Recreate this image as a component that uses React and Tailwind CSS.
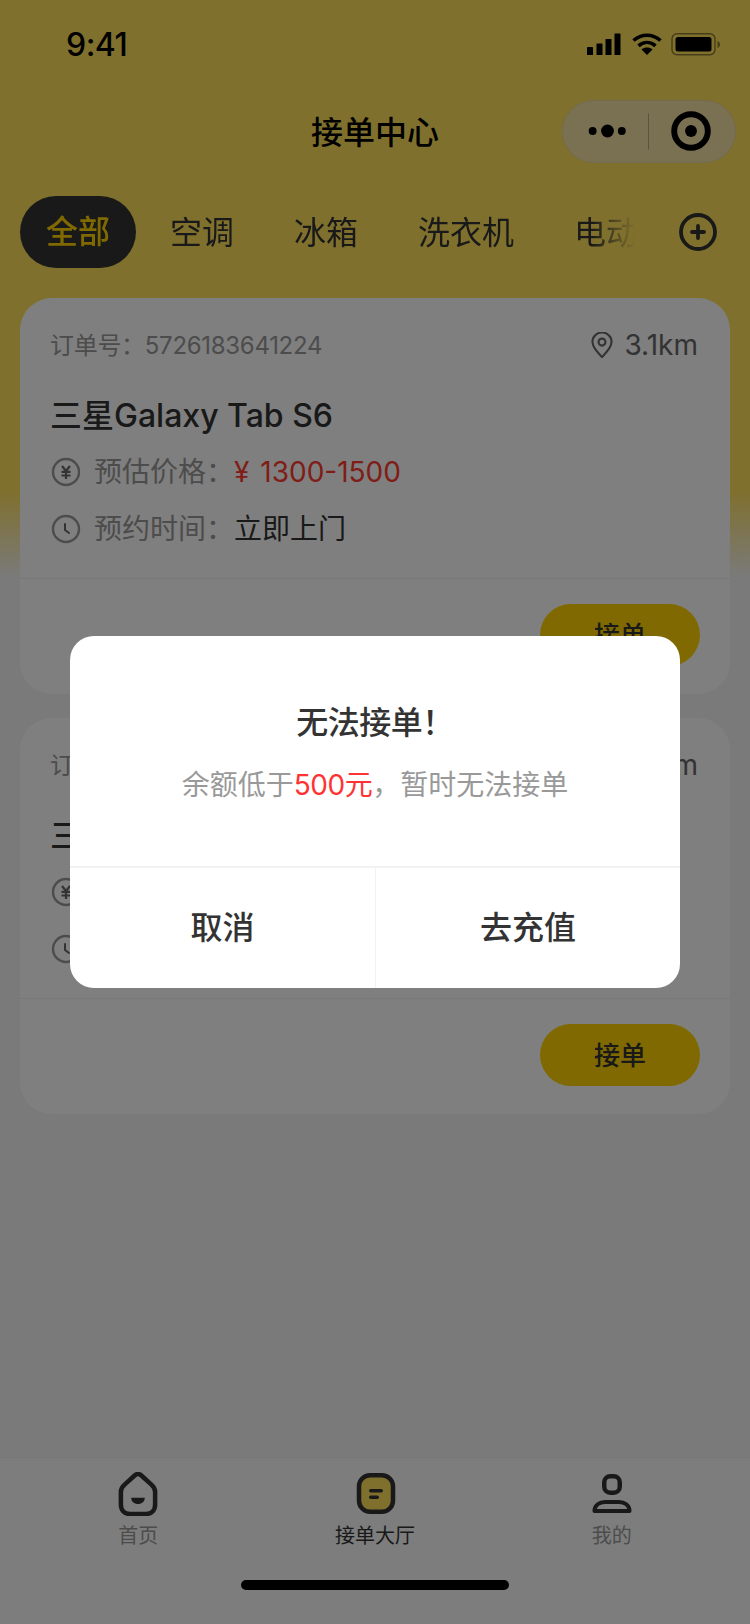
import React from 'react'

const font = 'font-["Inter","Noto_Sans_CJK_SC",sans-serif]'

function StatusIcons() {
  return (
    <svg width="134" height="24" viewBox="0 0 134 24" className="block">
      {/* signal */}
      <rect x="0" y="14" width="6" height="8" rx="0.5" fill="#000" />
      <rect x="9.5" y="10.5" width="6" height="11.5" rx="0.5" fill="#000" />
      <rect x="18.5" y="6" width="6" height="16" rx="0.5" fill="#000" />
      <rect x="27.5" y="0.5" width="6" height="21.5" rx="0.5" fill="#000" />
      {/* wifi */}
      <path d="M46.5 7.5c8-7 19-7 27 0" fill="none" stroke="#000" strokeWidth="3.6" />
      <path d="M51.5 12.8c5.2-4.4 11.8-4.4 17 0" fill="none" stroke="#000" strokeWidth="3.6" />
      <path d="M60 22l-5.5-5.6c3.3-2.6 7.7-2.6 11 0z" fill="#000" />
      {/* battery */}
      <rect x="85" y="0.7" width="43" height="21" rx="5" fill="none" stroke="#000" strokeOpacity="0.45" strokeWidth="1.4" />
      <rect x="88.5" y="4" width="36" height="14.5" rx="2.5" fill="#000" />
      <path d="M130.5 8v7c1.6-.6 2.6-2 2.6-3.5s-1-2.9-2.6-3.5z" fill="#000" fillOpacity="0.45" />
    </svg>
  )
}

function Pin() {
  return (
    <svg width="22" height="26" viewBox="1 1 20 24.500" fill="none" stroke="#666" strokeWidth="2">
      <path d="M11 1.500c-5 0-9 3.900-9 8.800 0 5.700 5.600 10.800 9 14.200 3.400-3.400 9-8.500 9-14.200 0-4.900-4-8.800-9-8.800z" strokeLinejoin="round" />
      <circle cx="11" cy="10.500" r="3.300" />
    </svg>
  )
}

function YenIcon() {
  return (
    <svg width="30" height="30" viewBox="0 0 30 30" fill="none" stroke="#999" strokeWidth="2.400">
      <circle cx="15" cy="15" r="13" />
      <path d="M11 9l4 5 4-5M10.500 14.800h9M10.500 18.500h9M15 14v8" stroke="#666" strokeWidth="2.200" />
    </svg>
  )
}

function ClockIcon() {
  return (
    <svg width="30" height="30" viewBox="0 0 30 30" fill="none" stroke="#999" strokeWidth="2.400">
      <circle cx="15" cy="15" r="13" />
      <path d="M14 10v6l4 3" stroke="#666" strokeWidth="2" strokeLinecap="round" strokeLinejoin="round" />
    </svg>
  )
}

function OrderCard({ order, distance }) {
  return (
    <div className="bg-white rounded-[32px] mb-6">
      <div className="px-[30px] pt-[27px] pb-[29px] border-b border-[#f0f0f0]">
        <div className="h-10 flex items-center justify-between">
          <span className="text-[24px] pt-[2px] text-[#999] tracking-[-0.3px]">订单号：{order}</span>
          <span className="flex items-center gap-[11px] text-[28px] text-[#666] mr-[2px]">
            <Pin />
            {distance}
          </span>
        </div>
        <div className="h-12 mt-[27px] flex items-center text-[32px] text-[#333] font-medium">三星Galaxy Tab S6</div>
        <div className="h-10 mt-3 ml-[1px] flex items-center gap-[13px] text-[28px] text-[#999]">
          <YenIcon />
          <div>
            预估价格：<span className="text-[#ff3b30]"><span className="mr-[3px]">¥</span> 1300-1500</span>
          </div>
        </div>
        <div className="h-10 mt-[17px] ml-[1px] flex items-center gap-[13px] text-[28px] text-[#999]">
          <ClockIcon />
          <div>
            预约时间：<span className="text-[#333]">立即上门</span>
          </div>
        </div>
      </div>
      <div className="flex justify-end pt-[25px] pb-7 pr-[30px]">
        <button className="w-[160px] h-[62px] rounded-full bg-[#ffd300] text-[26px] font-medium text-[#333]">接单</button>
      </div>
    </div>
  )
}

export default function App() {
  return (
    <div className={`${font} relative w-[750px] h-[1624px] overflow-hidden flex flex-col bg-[linear-gradient(#ffe05a_0,#ffe05a_490px,#f5f5f5_578px)]`}>
      {/* status bar */}
      <div className="h-[88px] shrink-0 flex items-center justify-between pl-[66px] pr-[29px] pt-[2px]">
        <span className="text-[32px] text-black font-medium tracking-[-0.5px]">9:41</span>
        <StatusIcons />
      </div>

      {/* nav */}
      <div className="h-[88px] shrink-0 flex items-center justify-center relative pt-[2px]">
        <span className="text-[32px] font-medium text-black">接单中心</span>
        <div className="absolute right-[14px] top-[12px] w-[174px] h-[63px] rounded-full bg-[#f4e2a6] border border-black/5 flex items-center">
          <svg width="174" height="63" viewBox="0 0 174 63" className="block">
            <circle cx="30" cy="31" r="4" fill="#000" />
            <circle cx="45" cy="31" r="6.500" fill="#000" />
            <circle cx="59.500" cy="31" r="4" fill="#000" />
            <rect x="86" y="13" width="1" height="37" fill="#000" fillOpacity="0.25" />
            <circle cx="129.500" cy="31" r="17" fill="none" stroke="#000" strokeWidth="6" />
            <circle cx="129.500" cy="31" r="6" fill="#000" />
          </svg>
        </div>
      </div>

      {/* tabs */}
      <div className="h-[72px] mt-5 shrink-0 flex items-center pl-5">
        <div className="w-[615px] flex items-center overflow-hidden text-[32px] text-[#333] whitespace-nowrap [mask-image:linear-gradient(to_right,black_93%,transparent)]">
          <div className="w-[116px] h-[72px] shrink-0 rounded-[36px] bg-[#333] text-[#ffd300] font-medium flex items-center justify-center">全部</div>
          <span className="ml-[34px] pt-[2px] shrink-0">空调</span>
          <span className="ml-[60px] pt-[2px] shrink-0">冰箱</span>
          <span className="ml-[60px] pt-[2px] shrink-0">洗衣机</span>
          <span className="ml-[60px] pt-[2px] shrink-0">电动车</span>
        </div>
        <svg width="40" height="40" viewBox="0 0 40 40" fill="none" stroke="#333" className="ml-[43px] shrink-0">
          <circle cx="20" cy="20" r="17" strokeWidth="3.800" />
          <path d="M20 14v12M14 20h12" strokeWidth="3.800" strokeLinecap="round" />
        </svg>
      </div>

      {/* orders */}
      <div className="px-5 pt-[30px] flex-1">
        <OrderCard order="5726183641224" distance="3.1km" />
        <OrderCard order="5726183641224" distance="3.1km" />
      </div>

      {/* tab bar */}
      <div className="h-[167px] shrink-0 bg-[#fafafa] border-t border-[#eee] px-5 pt-[14px] relative">
        <div className="grid grid-cols-3">
          <div className="flex flex-col items-center">
            <svg width="42" height="44" viewBox="1 1.500 40 41.900" fill="none">
              <path d="M21 3.300c1.200 0 2.200.6 3.200 1.500l9.600 8.700c2.500 2.200 3.500 3.800 3.500 7v12c0 5.500-3.300 9-8.800 9h-15c-5.500 0-8.800-3.500-8.800-9v-12c0-3.200 1-4.800 3.500-7l9.600-8.700c1-.9 2-1.500 3.200-1.500z" stroke="#333" strokeWidth="4.300" strokeLinejoin="round" />
              <path d="M14.500 26h13c0 3.600-2.900 6-6.500 6s-6.500-2.400-6.500-6z" fill="#333" />
            </svg>
            <span className="text-[20px] leading-[30px] mt-[5px] text-[#999]">首页</span>
          </div>
          <div className="flex flex-col items-center">
            <svg width="42" height="44" viewBox="0 0 42 44" fill="none">
              <rect x="5" y="3.250" width="34" height="36.500" rx="11" fill="#ffe05a" stroke="#333" strokeWidth="4.500" />
              <rect x="15" y="17" width="14" height="3.500" rx="1.750" fill="#333" />
              <rect x="15" y="23.500" width="10" height="3.500" rx="1.750" fill="#333" />
            </svg>
            <span className="text-[20px] leading-[30px] mt-[5px] text-[#333]">接单大厅</span>
          </div>
          <div className="flex flex-col items-center">
            <svg width="42" height="44" viewBox="0 0 42 44" fill="none" stroke="#333" strokeWidth="4.500">
              <rect x="13.250" y="4.250" width="15.500" height="16.500" rx="6" />
              <path d="M3.500 39c0-6 5-9 10.500-9h14c5.500 0 10.500 3 10.500 9z" strokeWidth="4" strokeLinejoin="round" />
            </svg>
            <span className="text-[20px] leading-[30px] mt-[5px] text-[#999]">我的</span>
          </div>
        </div>
        <div className="w-[268px] h-[10px] rounded-full bg-black mx-auto mt-[29px]"></div>
      </div>

      {/* dialog */}
      <div className="absolute inset-0 bg-black/50 flex items-center justify-center">
        <div className="w-[610px] h-[352px] rounded-[24px] bg-white overflow-hidden flex flex-col">
          <div className="h-[230px] flex flex-col items-center pt-[64px]">
            <div className="text-[32px] leading-[46px] font-medium text-[#333] tracking-[-0.5px]">无法接单！</div>
            <div className="text-[28px] leading-10 mt-[19px] text-[#999]">
              余额低于<span className="text-[#ff3333] tracking-[-0.5px]">500元</span>，暂时无法接单
            </div>
          </div>
          <div className="flex-1 grid grid-cols-2 border-t-2 border-[#f2f2f2] text-[32px] font-medium text-[#333]">
            <div className="flex items-center justify-center">取消</div>
            <div className="flex items-center justify-center border-l border-[#f2f2f2]">去充值</div>
          </div>
        </div>
      </div>
    </div>
  )
}
